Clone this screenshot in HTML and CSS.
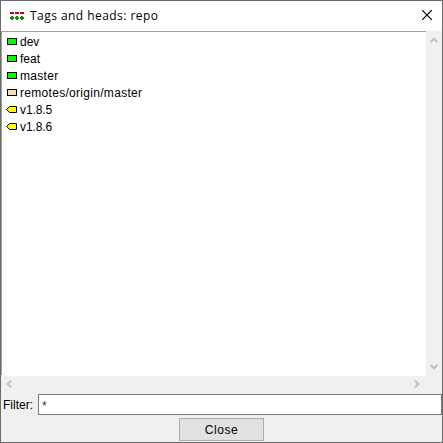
FILE: index.html
```
<!DOCTYPE html>
<html lang="en">
<head>
<meta charset="utf-8">
<title>Tags and heads: repo</title>
<link rel="stylesheet" href="styles.css">
</head>
<body>
<div class="window">
  <header class="titlebar">
    <svg class="logo" width="14" height="8" viewBox="0 0 14 8" shape-rendering="crispEdges">
      <path fill="#c00010" d="M0 0h4v2H0zM5 0h4v2H5zM10 0h4v2h-4z"/>
      <path fill="#108a10" d="M1 4h2v4H1zM0 5h4v2H0zM6 4h2v4H6zM5 5h4v2H5zM11 4h2v4h-2zM10 5h4v2h-4z"/>
    </svg>
    <h1 class="title"><span class="title-text">Tags and heads: repo</span></h1>
    <svg class="dismiss" width="10" height="10" viewBox="0 0 10 10"><path d="M0 0l10 10M10 0L0 10" stroke="#000" stroke-width="1.2"/></svg>
  </header>
  <main class="browser">
    <ul class="refs">
      <li class="ref"><i class="mark head"></i><span>dev</span></li>
      <li class="ref"><i class="mark head"></i><span>feat</span></li>
      <li class="ref"><i class="mark head"></i><span class="master">master</span></li>
      <li class="ref"><i class="mark remote"></i><span class="origin">remotes/origin/master</span></li>
      <li class="ref"><svg class="tag" width="11" height="7" viewBox="0 0 11 7"><path d="M.7 3.5L3.5.5h7v6h-7z" fill="#ff0" stroke="#000"/></svg><span class="version">v1.8.5</span></li>
      <li class="ref"><svg class="tag" width="11" height="7" viewBox="0 0 11 7"><path d="M.7 3.5L3.5.5h7v6h-7z" fill="#ff0" stroke="#000"/></svg><span class="version">v1.8.6</span></li>
    </ul>
    <div class="vscroll">
      <svg width="8" height="6" viewBox="0 0 8 6"><path class="arrow" d="M.7 5L4 1.7 7.3 5"/></svg>
      <svg width="8" height="6" viewBox="0 0 8 6"><path class="arrow" d="M.7 1L4 4.3 7.3 1"/></svg>
    </div>
  </main>
  <div class="hscroll">
    <svg width="6" height="8" viewBox="0 0 6 8"><path class="arrow" d="M5 .7L1.7 4 5 7.3"/></svg>
    <svg width="6" height="8" viewBox="0 0 6 8"><path class="arrow" d="M1 .7L4.3 4 1 7.3"/></svg>
  </div>
  <div class="filter"><span class="filter-label">Filter:</span><div class="entry">*</div></div>
  <footer class="actions"><button class="close">Close</button></footer>
</div>
</body>
</html>
```
FILE: styles.css
```
* { box-sizing: border-box; }
body { margin: 0; }
svg { display: block; flex: none; }
.window {
  width: 443px;
  height: 443px;
  border: 1px solid #6c6a6c;
  background: #f0f0f0;
  color: #000;
  font: 12px/17px "Liberation Sans", Arial, sans-serif;
  display: flex;
  flex-direction: column;
  overflow: hidden;
}
.titlebar {
  height: 30px;
  flex: none;
  background: #fff;
  display: flex;
  align-items: flex-start;
  padding: 0 10px 0 9px;
}
.logo { margin-top: 11px; }
.title { flex: 1; margin: 5px 0 0 6px; font: 12px/20px "Open Sans", "Noto Sans", sans-serif; }
.title-text { letter-spacing: .45px; }
.dismiss { margin-top: 9px; }
.browser { height: 345px; flex: none; display: flex; background: #fff; }
.refs {
  flex: none;
  width: 425px;
  height: 344px;
  margin: 0;
  padding: 2px 0 0 4px;
  list-style: none;
  border-left: 1px solid #a0a0a0;
  border-top: 1px solid #a0a0a0;
}
.ref { height: 17px; display: flex; align-items: center; }
.mark { width: 10px; height: 7px; margin: 0 3px 2px 1px; border: 1px solid #000; }
.head { background: #0f0; }
.remote { background: #ffddaa; }
.tag { margin: 0 3px 2px 0; }
.master, .origin { letter-spacing: .3px; }
.version { letter-spacing: -.1px; }
.vscroll {
  width: 16px;
  background: #f0f0f0;
  display: flex;
  flex-direction: column;
  justify-content: space-between;
  align-items: center;
  padding: 6px 1px 6px 0;
}
.arrow { fill: none; stroke: #bfbfbf; stroke-width: 2; }
.hscroll { height: 16px; flex: none; display: flex; align-items: center; justify-content: space-between; padding: 0 22px 0 5px; }
.filter { height: 24px; flex: none; display: flex; padding-top: 2px; }
.filter-label { width: 37px; padding-left: 2px; line-height: 22px; white-space: nowrap; }
.entry { flex: 1; height: 21px; border: 1px solid #7a7a7a; background: #fff; padding: 3px 3px 0; color: #333; }
.actions { flex: 1; display: flex; justify-content: center; align-items: flex-start; padding-top: 2px; }
.close {
  width: 85px;
  height: 23px;
  padding: 0;
  border: 1px solid #adadad;
  background: #e1e1e1;
  color: #000;
  font: 12px/20px "Liberation Sans", Arial, sans-serif;
  letter-spacing: .55px;
}
```
